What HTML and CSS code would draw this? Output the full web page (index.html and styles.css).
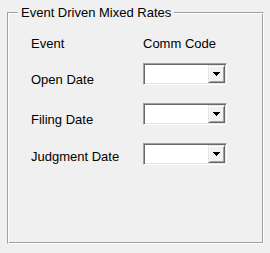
FILE: index.html
```html
<!DOCTYPE html>
<html>
<head>
    <title>Event Driven Mixed Rates</title>
    <link rel="stylesheet" href="styles.css">
</head>
<body>
    <div class="group">
        <span class="group-title">Event Driven Mixed Rates</span>

        <div class="rates">
            <div class="head">Event</div>
            <div class="head">Comm Code</div>

            <div class="label">Open Date</div>
            <div class="combo">
                <div class="combo-field"></div>
                <div class="combo-button">
                    <svg class="arrow" width="7" height="4" viewBox="0 0 7 4"><path d="M0 0h7v1h-1v1h-1v1h-1v1h-1v-1h-1v-1h-1v-1h-1z"/></svg>
                </div>
            </div>

            <div class="label">Filing Date</div>
            <div class="combo">
                <div class="combo-field"></div>
                <div class="combo-button">
                    <svg class="arrow" width="7" height="4" viewBox="0 0 7 4"><path d="M0 0h7v1h-1v1h-1v1h-1v1h-1v-1h-1v-1h-1v-1h-1z"/></svg>
                </div>
            </div>

            <div class="label label-high">Judgment Date</div>
            <div class="combo">
                <div class="combo-field"></div>
                <div class="combo-button">
                    <svg class="arrow" width="7" height="4" viewBox="0 0 7 4"><path d="M0 0h7v1h-1v1h-1v1h-1v1h-1v-1h-1v-1h-1v-1h-1z"/></svg>
                </div>
            </div>
        </div>
    </div>
</body>
</html>
```

FILE: styles.css
```css
body {
    margin: 0;
    background: #f0f0f0;
    color: #000;
    font-family: 'Liberation Sans', Arial, sans-serif;
    font-size: 13px;
    line-height: 15px;
}
.group {
    position: relative;
    box-sizing: border-box;
    margin: 12px 0 0 7px;
    width: 257px;
    height: 232px;
    border-top: 1px solid #a0a0a0;
    border-left: 1px solid #a0a0a0;
    border-bottom: 1px solid #fff;
    border-right: 1px solid #fff;
    box-shadow: inset 1px 1px 0 #fff, inset -1px -1px 0 #a0a0a0;
    padding: 23px 0 0 23px;
}
.group-title {
    position: absolute;
    top: -8px;
    left: 10px;
    padding: 0 3px;
    background: #f0f0f0;
}
.rates {
    display: grid;
    grid-template-columns: 112px 84px;
    row-gap: 16px;
}
.head {
    margin-bottom: -4px;
}
.label {
    padding-top: 9px;
}
.label-high {
    padding-top: 6px;
    margin-bottom: 3px;
}
.combo {
    display: flex;
    box-sizing: border-box;
    height: 22px;
    border-top: 1px solid #a0a0a0;
    border-left: 1px solid #a0a0a0;
    border-bottom: 1px solid #fff;
    border-right: 1px solid #fff;
    padding: 1px;
    background: #fff;
    box-shadow: inset 1px 1px 0 #696969, inset -1px -1px 0 #e3e3e3;
}
.combo-field {
    flex: 1;
    background: #fff;
}
.combo-button {
    display: flex;
    align-items: center;
    justify-content: center;
    box-sizing: border-box;
    width: 17px;
    background: #f0f0f0;
    border-top: 1px solid #e3e3e3;
    border-left: 1px solid #e3e3e3;
    border-bottom: 1px solid #696969;
    border-right: 1px solid #696969;
    box-shadow: inset 1px 1px 0 #fff, inset -1px -1px 0 #a0a0a0;
}
.arrow {
    display: block;
    fill: #000;
    shape-rendering: crispEdges;
}
```
